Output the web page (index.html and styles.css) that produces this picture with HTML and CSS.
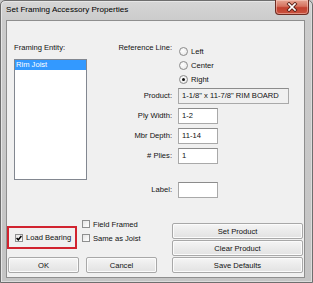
FILE: index.html
```html
<!DOCTYPE html>
<html lang="en">
<head>
  <meta charset="UTF-8">
  <meta name="viewport" content="width=device-width, initial-scale=1.0">
  <title>Set Framing Accessory Properties</title>
  <link rel="stylesheet" href="styles.css">
</head>
<body>
  <div class="window">
    <div class="titlebar">
      <span class="title">Set Framing Accessory Properties</span>
      <a class="close">
        <svg width="14" height="10" viewBox="0 0 14 10">
          <path d="M4 2 L10 8 M10 2 L4 8" stroke="#5a2118" stroke-width="3.4" stroke-linecap="square"/>
          <path d="M4 2 L10 8 M10 2 L4 8" stroke="#fff" stroke-width="1.7" stroke-linecap="square"/>
        </svg>
      </a>
    </div>

    <div class="client">
      <div class="top">
        <div class="entity">
          <div class="caption">Framing Entity:</div>
          <div class="listbox">
            <div class="item selected">Rim Joist</div>
          </div>
        </div>

        <div class="props">
          <label class="lbl lbl-ref">Reference Line:</label>
          <div class="radios">
            <div class="radio-row"><span class="radio"></span>Left</div>
            <div class="radio-row"><span class="radio"></span>Center</div>
            <div class="radio-row"><span class="radio checked"></span>Right</div>
          </div>

          <label class="lbl">Product:</label>
          <div class="field field-wide readonly">1-1/8" x 11-7/8" RIM BOARD</div>

          <label class="lbl">Ply Width:</label>
          <div class="field">1-2</div>

          <label class="lbl">Mbr Depth:</label>
          <div class="field">11-14</div>

          <label class="lbl"># Plies:</label>
          <div class="field">1</div>

          <label class="lbl spaced">Label:</label>
          <div class="field spaced"></div>
        </div>
      </div>

      <div class="bottom">
        <div class="bottom-left">
          <div class="checks">
            <div class="highlight">
              <div class="check-row">
                <span class="checkbox">
                  <svg width="6" height="6" viewBox="0 0 6 6"><path d="M0.6 3 L2.3 4.8 L5.4 1" fill="none" stroke="#000" stroke-width="1.5"/></svg>
                </span>Load Bearing
              </div>
            </div>
            <div class="check-group">
              <div class="check-row"><span class="checkbox"></span>Field Framed</div>
              <div class="check-row"><span class="checkbox"></span>Same as Joist</div>
            </div>
          </div>
          <div class="dialog-buttons">
            <button class="btn btn-small">OK</button>
            <button class="btn btn-small">Cancel</button>
          </div>
        </div>

        <div class="product-buttons">
          <button class="btn">Set Product</button>
          <button class="btn">Clear Product</button>
          <button class="btn">Save Defaults</button>
        </div>
      </div>
    </div>
  </div>
</body>
</html>
```

FILE: styles.css
```css
body {
  margin: 0;
  width: 313px;
  height: 283px;
  overflow: hidden;
  background: #c8c8c8;
  font-family: "Liberation Sans", Arial, sans-serif;
  font-size: 7.6px;
  color: #111;
}

.window {
  box-sizing: border-box;
  height: 283px;
  display: flex;
  flex-direction: column;
  border: 1px solid #6e6e6e;
  border-radius: 5px 5px 0 0;
  background: linear-gradient(#d6d6d6, #cbcbcb 20px, #c4c4c4);
  box-shadow: inset 1px 1px 0 #e6e6e6, inset -1px -1px 0 #dcdcdc;
}

.titlebar {
  height: 19px;
  display: flex;
  justify-content: space-between;
  align-items: flex-start;
  padding-left: 5px;
}

.title {
  font-size: 8.1px;
  line-height: 18px;
  color: #000;
}

.close {
  width: 34px;
  height: 15px;
  margin-top: -1px;
  margin-right: 3px;
  box-sizing: border-box;
  display: flex;
  align-items: center;
  justify-content: center;
  border: 1px solid #6d2c22;
  border-top: none;
  border-radius: 0 0 4px 4px;
  background: linear-gradient(#e6a593, #d5725f 45%, #c2402e 55%, #c9523e);
  box-shadow: inset 0 0 0 1px rgba(255, 220, 210, 0.45);
}

.client {
  flex: 1;
  display: flex;
  flex-direction: column;
  margin: 0 7px 4px 5px;
  border: 1px solid #8e8e8e;
  background: #f0f0f0;
}

/* upper part */
.top {
  display: flex;
  padding: 22px 0 0 7px;
}

.entity {
  width: 73px;
}

.caption {
  line-height: 10px;
}

.listbox {
  box-sizing: border-box;
  height: 121px;
  margin-top: 6px;
  border: 1px solid #828790;
  background: #fff;
}

.item {
  line-height: 10px;
  padding-left: 1px;
}

.item.selected {
  background: #3399ff;
  color: #fff;
}

.props {
  display: grid;
  grid-template-columns: 79px 111px;
  column-gap: 6px;
  row-gap: 4px;
  align-items: center;
  margin: 1px 0 0 6px;
}

.lbl {
  text-align: right;
  line-height: 10px;
}

.lbl-ref {
  align-self: start;
  line-height: 8px;
}

.radios {
  margin-bottom: -2px;
}

.radio-row {
  height: 14px;
  display: flex;
  align-items: center;
}

.radio {
  box-sizing: border-box;
  width: 9px;
  height: 9px;
  margin: 0 3px 0 1px;
  display: flex;
  align-items: center;
  justify-content: center;
  border: 1px solid #8b8b8b;
  border-radius: 50%;
  background: radial-gradient(circle at 40% 40%, #fff, #e2e2e2);
}

.radio.checked::after {
  content: "";
  width: 3px;
  height: 3px;
  border-radius: 50%;
  background: #111;
}

.field {
  box-sizing: border-box;
  width: 40px;
  height: 16px;
  padding-left: 3px;
  line-height: 14px;
  border: 1px solid #a9a9a9;
  border-top-color: #8c8c8c;
  background: #fff;
  white-space: nowrap;
}

.field-wide {
  width: 111px;
}

.field.readonly {
  background: #f0f0f0;
}

.spaced {
  margin-top: 14px;
}

/* lower part */
.bottom {
  margin-top: auto;
  display: flex;
  align-items: flex-end;
  justify-content: space-between;
  padding: 0 1px 4px 0;
}

.checks {
  display: flex;
  align-items: flex-start;
}

.highlight {
  box-sizing: border-box;
  width: 70px;
  height: 23px;
  margin-top: 9px;
  padding-left: 6px;
  display: flex;
  align-items: center;
  border: 2px solid #d1232f;
}

.check-group {
  margin-left: 5px;
}

.check-row {
  height: 14px;
  display: flex;
  align-items: center;
  white-space: nowrap;
}

.checkbox {
  box-sizing: border-box;
  width: 8px;
  height: 8px;
  margin-right: 3px;
  display: flex;
  align-items: center;
  justify-content: center;
  border: 1px solid #8e8f8f;
  background: linear-gradient(135deg, #e4e4e4, #fff);
}

.dialog-buttons {
  display: flex;
  gap: 7px;
  margin: 8px 0 0 1px;
}

.product-buttons {
  display: flex;
  flex-direction: column;
  gap: 1px;
  width: 131px;
}

.btn {
  box-sizing: border-box;
  height: 16px;
  padding: 0;
  font-family: inherit;
  font-size: 7.6px;
  color: #111;
  border: 1px solid #a8a8a8;
  border-radius: 2px;
  background: linear-gradient(#f5f5f5, #ebebeb 50%, #e2e2e2);
  box-shadow: inset 0 0 0 1px #fbfbfb;
}

.btn-small {
  width: 71px;
}
```
